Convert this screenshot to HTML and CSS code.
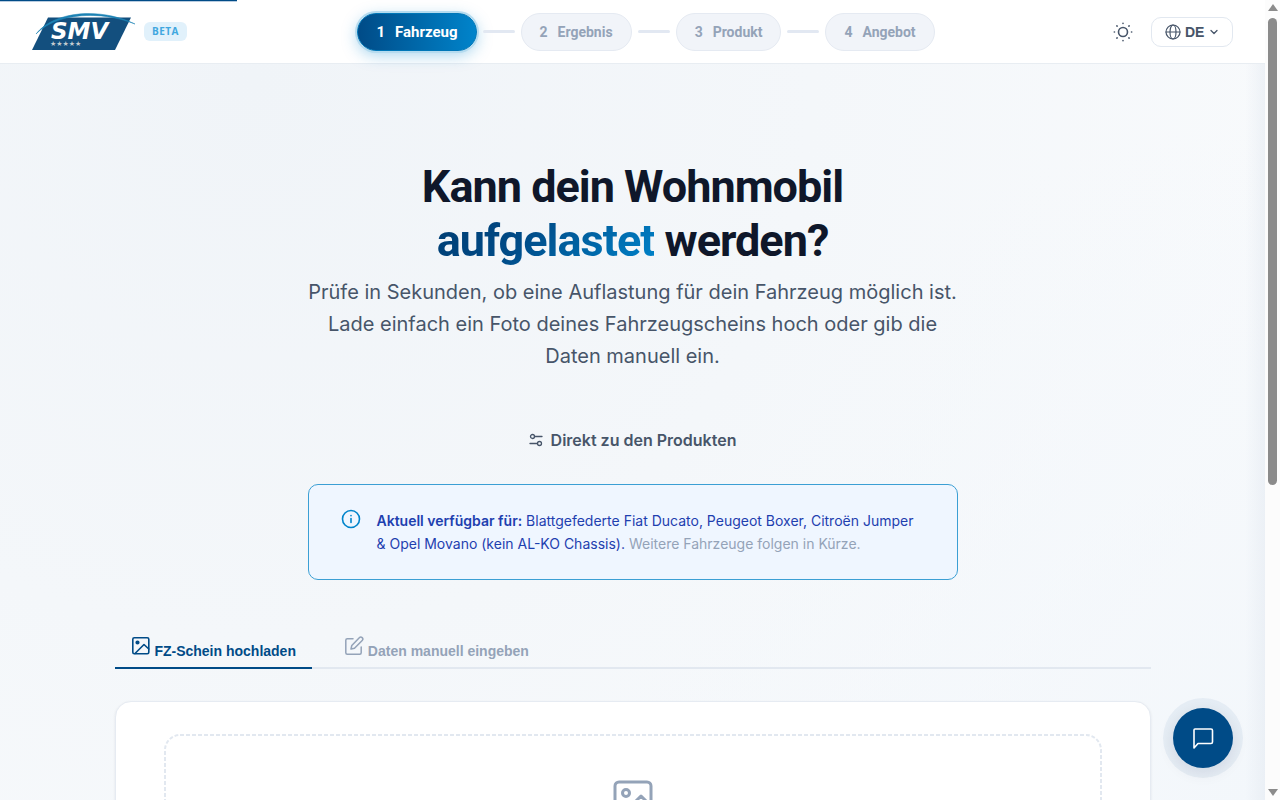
FILE: index.html
```html
<!DOCTYPE html>
<html lang="de">

<head>
    <meta charset="UTF-8">
    <meta name="viewport" content="width=device-width, initial-scale=1.0">
    <title>SMV Auflastung</title>
    <link rel="stylesheet" href="styles.css">
</head>

<body>
    <div class="page">
        <header class="header">
            <div class="progress"></div>
            <div class="brand">
                <a href="#" class="logo">
                    <svg width="104" height="38" viewBox="0 0 104 38">
                        <path d="M16 4.500H99L83 37H0Z" fill="#134f7e" />
                        <text x="19" y="26" class="logo-text">SMV</text>
                        <text x="18" y="33" class="logo-stars">★★★★★</text>
                        <path d="M4 21C22 -2 68 -6 103 11C68 -3 24 0 4 21Z" fill="#1c82b4" stroke="#1c82b4" stroke-width="0.500" />
                    </svg>
                </a>
                <span class="badge">BETA</span>
            </div>
            <nav class="steps">
                <a href="#" class="step active"><span>1</span><span>Fahrzeug</span></a>
                <span class="line"></span>
                <a href="#" class="step"><span>2</span><span>Ergebnis</span></a>
                <span class="line"></span>
                <a href="#" class="step"><span>3</span><span>Produkt</span></a>
                <span class="line"></span>
                <a href="#" class="step"><span>4</span><span>Angebot</span></a>
            </nav>
            <div class="actions">
                <button class="theme-button" aria-label="Design wechseln">
                    <svg class="icon" width="20" height="20" viewBox="0 0 20 20" stroke-width="1.600">
                        <circle cx="10" cy="10" r="4.500" />
                        <path d="M10 1.300v.2M10 18.500v.2M1.300 10h.2M18.500 10h.2M3.900 3.900l.2.2M15.900 15.900l.2.2M3.900 16.100l.2-.2M15.900 4.100l.2-.2" />
                    </svg>
                </button>
                <label class="language">
                    <svg class="icon" width="16" height="16" viewBox="0 0 16 16" stroke-width="1.200">
                        <circle cx="8" cy="8" r="7" />
                        <ellipse cx="8" cy="8" rx="3" ry="7" />
                        <path d="M1 8h14" />
                    </svg>
                    <select aria-label="Sprache">
                        <option>DE</option>
                        <option>EN</option>
                    </select>
                    <svg class="icon" width="10" height="10" viewBox="0 0 10 10" stroke-width="1.300">
                        <path d="M2 3.500L5 6.500L8 3.500" />
                    </svg>
                </label>
            </div>
        </header>

        <main class="container">
            <section class="hero">
                <h1>Kann dein Wohnmobil <br><span class="highlight">aufgelastet</span> werden?</h1>
                <p class="subtitle">Prüfe in Sekunden, ob eine Auflastung für dein Fahrzeug möglich ist. Lade einfach ein Foto deines Fahrzeugscheins hoch oder gib die Daten manuell ein.</p>
                <a href="#" class="products-link">
                    <svg class="icon" width="14" height="14" viewBox="0 0 14 14" stroke-width="1.300">
                        <circle cx="3.500" cy="3.500" r="2" />
                        <path d="M5.500 3.500H13M1 10.500H8.500" />
                        <circle cx="10.500" cy="10.500" r="2" />
                    </svg>
                    Direkt zu den Produkten
                </a>
                <div class="info">
                    <svg class="icon" width="20" height="20" viewBox="0 0 20 20" stroke-width="1.600">
                        <circle cx="10" cy="10" r="8.500" />
                        <path d="M10 9.500v4M10 6.600v.1" />
                    </svg>
                    <p><strong>Aktuell verfügbar für:</strong> Blattgefederte Fiat Ducato, Peugeot Boxer, Citroën Jumper &amp; Opel Movano (kein AL-KO Chassis). <span>Weitere Fahrzeuge folgen in Kürze.</span></p>
                </div>
            </section>

            <div class="tabs">
                <button class="tab active">
                    <svg class="icon" width="20" height="20" viewBox="0 0 20 20" stroke-width="1.600">
                        <rect x="1.800" y="1.800" width="16" height="16" rx="1.500" />
                        <circle cx="6.500" cy="6.500" r="1.300" fill="currentColor" />
                        <path d="M4 17.500L13 8.500L17.800 13" />
                    </svg>
                    FZ-Schein hochladen
                </button>
                <button class="tab">
                    <svg class="icon" width="20" height="20" viewBox="0 0 20 20" stroke-width="1.500">
                        <path d="M9 2.800H3.300A1.500 1.500 0 0 0 1.800 4.300V16.700A1.500 1.500 0 0 0 3.300 18.200H15.700A1.500 1.500 0 0 0 17.200 16.700V11" />
                        <path d="M15.300 1.700A1.900 1.900 0 0 1 18.200 4.500L10.500 12.200L7 13L7.800 9.400Z" />
                    </svg>
                    Daten manuell eingeben
                </button>
            </div>

            <section class="card">
                <div class="dropzone">
                    <svg class="dashes" width="100%" height="100%">
                        <rect width="100%" height="100%" rx="16" />
                    </svg>
                    <svg class="icon" width="48" height="48" viewBox="0 0 48 48" stroke-width="3">
                        <rect x="6" y="6" width="36" height="36" rx="4" />
                        <circle cx="17" cy="17" r="3.500" />
                        <path d="M42 30L32 20L10 42" />
                    </svg>
                </div>
            </section>
        </main>
    </div>

    <button class="chat-button" aria-label="Chat öffnen">
        <svg class="icon" width="24" height="24" viewBox="0 0 24 24" stroke-width="1.600">
            <path d="M3 22V4A1 1 0 0 1 4 3H20A1.500 1.500 0 0 1 21.500 4.500V16A1.500 1.500 0 0 1 20 17.500H7Z" />
        </svg>
    </button>

    <div class="scrollbar">
        <span class="arrow-up"></span>
        <span class="thumb"></span>
        <span class="arrow-down"></span>
    </div>
</body>

</html>
```
FILE: styles.css
```css
* {
    box-sizing: border-box;
}

body {
    margin: 0;
    display: flex;
    height: 100vh;
    overflow: hidden;
    font-family: Inter, sans-serif;
    color: #475569;
}

a {
    color: inherit;
    text-decoration: none;
}

button {
    border: none;
    background: none;
    padding: 0;
    cursor: pointer;
}

.icon {
    fill: none;
    stroke: currentColor;
    stroke-linecap: round;
    stroke-linejoin: round;
    flex-shrink: 0;
}

.page {
    flex: 1;
    overflow: hidden;
    background: linear-gradient(270deg, rgba(226, 232, 240, 0.5), rgba(226, 232, 240, 0) 20px),
        radial-gradient(circle at 100% 100%, #f3f7fb, rgba(243, 247, 251, 0) 45%),
        radial-gradient(circle at 20% 10%, #f0f4f8, #f4f7fa 45%, #f8fafc 85%);
}

/* Header */
.header {
    position: relative;
    display: flex;
    align-items: center;
    justify-content: space-between;
    height: 64px;
    padding: 0 32px;
    background-color: #fff;
    border-bottom: 1px solid #e8edf2;
}

.progress {
    position: absolute;
    top: 0;
    left: 0;
    width: 237px;
    height: 1px;
    background-color: #004b87;
    box-shadow: 0 1px 0 #b8cce0;
}

.brand {
    display: flex;
    align-items: center;
    gap: 8px;
}

.logo svg {
    display: block;
}

.logo-text {
    font: italic bold 23px "DejaVu Sans", sans-serif;
    fill: #fff;
}

.logo-stars {
    font: 7px "DejaVu Sans", sans-serif;
    fill: #c3ccd0;
}

.badge {
    padding: 0 8px;
    border-radius: 6px;
    background-color: #e1f1fb;
    color: #40a7df;
    font: bold 10px/19px "Open Sans", sans-serif;
    letter-spacing: 0.05em;
}

.steps {
    display: flex;
    align-items: center;
    gap: 6px;
}

.step {
    display: flex;
    gap: 10px;
    padding: 0 18px;
    border: 1px solid #e5eaf2;
    border-radius: 19px;
    background-color: #f1f4f9;
    color: #94a3b8;
    font: bold 14px/36px Roboto, sans-serif;
}

.step.active {
    border-color: #0077b8;
    background: linear-gradient(90deg, #004b87, #0084cb);
    color: #fff;
    font-size: 15px;
    box-shadow: 0 0 0 2px #b5dbef, 0 4px 16px rgba(0, 132, 203, 0.35);
}

.line {
    width: 32px;
    height: 3px;
    border-radius: 2px;
    background-color: #e2e8f2;
}

.actions {
    display: flex;
    align-items: center;
    gap: 10px;
}

.theme-button {
    display: flex;
    align-items: center;
    justify-content: center;
    width: 36px;
    height: 36px;
    color: #475569;
}

.language {
    display: flex;
    align-items: center;
    height: 30px;
    padding: 0 13px;
    border: 1px solid #e2e8f0;
    border-radius: 10px;
    gap: 4px;
}

.language select {
    appearance: none;
    border: none;
    padding: 0;
    background: none;
    color: #475569;
    font: bold 14px "Liberation Sans", sans-serif;
}

/* Hero */
.container {
    max-width: 1100px;
    margin: 0 auto;
    padding: 96px 32px 0;
}

.hero {
    display: flex;
    flex-direction: column;
    align-items: center;
    max-width: 650px;
    margin: 0 auto;
    text-align: center;
}

h1 {
    margin: 0 0 8px;
    color: #0f172a;
    font: bold 45px/54px Roboto, sans-serif;
    letter-spacing: -1px;
}

.highlight {
    background: linear-gradient(135deg, #003c71, #004b87 40%, #0084cb);
    background-clip: text;
    color: transparent;
}

.subtitle {
    margin: 0;
    font-size: 20px;
    line-height: 32px;
}

.products-link {
    display: flex;
    align-items: center;
    gap: 8px;
    margin: 56px 0 32px;
    font-size: 16px;
    font-weight: 600;
    line-height: 24px;
}

.info {
    display: flex;
    gap: 16px;
    width: 100%;
    padding: 24px 32px;
    border: 1px solid #3b9fd4;
    border-radius: 10px;
    background-color: #eff6ff;
    color: #1e40af;
    font-size: 14px;
    line-height: 23px;
    text-align: left;
}

.info p {
    margin: 0;
}

.info strong {
    font-weight: 600;
}

.info span {
    color: #94a3b8;
}

.info .icon {
    color: #0084cb;
}

/* Tabs */
.tabs {
    display: flex;
    gap: 16px;
    margin-top: 48px;
    border-bottom: 2px solid #e2e8f0;
}

.tab {
    height: 41px;
    margin-bottom: -2px;
    padding: 0 16px;
    border-bottom: 2px solid transparent;
    color: #94a3b8;
    font: bold 14px "Liberation Sans", sans-serif;
}

.tab.active {
    border-bottom-color: #004b87;
    color: #004b87;
}

/* Upload */
.card {
    margin-top: 32px;
    padding: 32px 48px;
    border: 1px solid #e6ebf2;
    border-radius: 16px;
    background-color: #fff;
    box-shadow: 0 1px 3px rgba(15, 23, 42, 0.08);
}

.dropzone {
    position: relative;
    display: flex;
    justify-content: center;
    min-height: 300px;
    padding: 42px;
    color: #94a3b8;
}

.dashes {
    position: absolute;
    inset: 0;
    overflow: hidden;
    border-radius: 16px;
}

.dashes rect {
    fill: none;
    stroke: #e2e8f0;
    stroke-width: 4px;
    stroke-dasharray: 4 2;
}

.chat-button {
    position: fixed;
    right: 47px;
    bottom: 32px;
    display: flex;
    align-items: center;
    justify-content: center;
    width: 60px;
    height: 60px;
    border-radius: 50%;
    background-color: #004b87;
    color: #fff;
    box-shadow: 0 0 0 10px rgba(0, 75, 135, 0.06), 0 4px 16px rgba(0, 40, 80, 0.1);
}

/* Scrollbar */
.scrollbar {
    display: flex;
    flex-direction: column;
    align-items: center;
    width: 15px;
    padding: 4px 0;
    background-color: #fcfcfc;
}

.arrow-up,
.arrow-down {
    border: 5px solid transparent;
    border-top-width: 0;
    border-bottom: 7px solid #8b8b8b;
}

.arrow-down {
    margin-top: auto;
    transform: rotate(180deg);
}

.thumb {
    width: 9px;
    height: 59%;
    margin-top: 7px;
    border-radius: 5px;
    background-color: #8b8b8b;
}
```
